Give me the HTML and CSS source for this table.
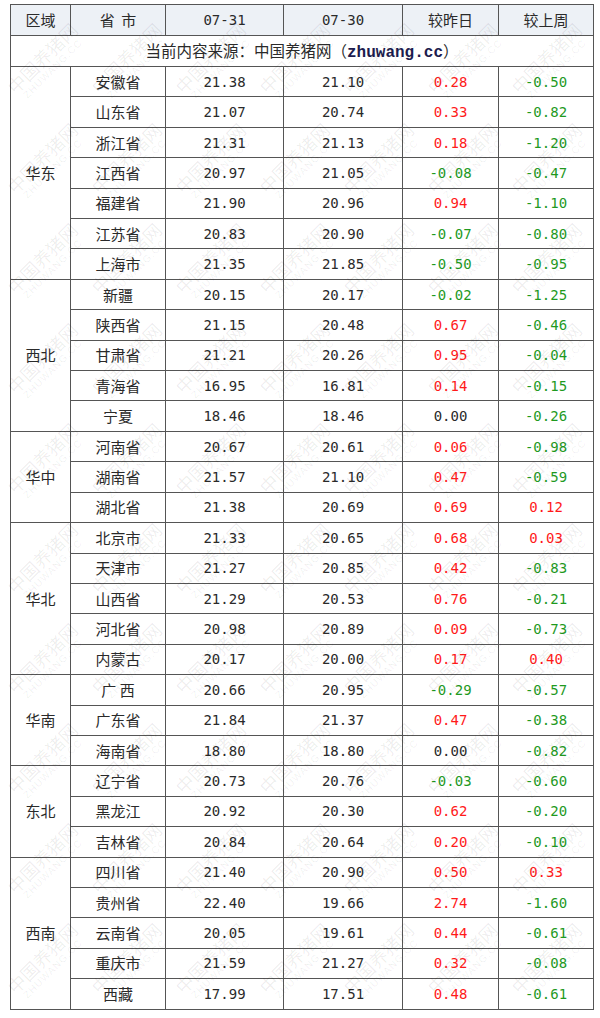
FILE: index.html
```html
<!DOCTYPE html>
<html lang="zh">
<head>
<meta charset="utf-8">
<title>生猪价格</title>
<link rel="stylesheet" href="styles.css">
</head>
<body>
<div class="page">
<table class="price">
<colgroup><col class="c1"><col class="c2"><col class="c3"><col class="c4"><col class="c5"><col class="c6"></colgroup>
<thead>
<tr class="head"><th>区域</th><th>省&nbsp;&nbsp;市</th><th class="num">07-31</th><th class="num">07-30</th><th>较昨日</th><th>较上周</th></tr>
<tr class="src"><td colspan="6">当前内容来源：中国养猪网（<b class="site">zhuwang.cc</b>）</td></tr>
</thead>
<tbody>
<tr><td rowspan="7" class="reg">华东</td><td>安徽省</td><td class="num">21.38</td><td class="num">21.10</td><td class="num up">0.28</td><td class="num dn">-0.50</td></tr>
<tr><td>山东省</td><td class="num">21.07</td><td class="num">20.74</td><td class="num up">0.33</td><td class="num dn">-0.82</td></tr>
<tr><td>浙江省</td><td class="num">21.31</td><td class="num">21.13</td><td class="num up">0.18</td><td class="num dn">-1.20</td></tr>
<tr><td>江西省</td><td class="num">20.97</td><td class="num">21.05</td><td class="num dn">-0.08</td><td class="num dn">-0.47</td></tr>
<tr><td>福建省</td><td class="num">21.90</td><td class="num">20.96</td><td class="num up">0.94</td><td class="num dn">-1.10</td></tr>
<tr><td>江苏省</td><td class="num">20.83</td><td class="num">20.90</td><td class="num dn">-0.07</td><td class="num dn">-0.80</td></tr>
<tr><td>上海市</td><td class="num">21.35</td><td class="num">21.85</td><td class="num dn">-0.50</td><td class="num dn">-0.95</td></tr>

<tr><td rowspan="5" class="reg">西北</td><td>新疆</td><td class="num">20.15</td><td class="num">20.17</td><td class="num dn">-0.02</td><td class="num dn">-1.25</td></tr>
<tr><td>陕西省</td><td class="num">21.15</td><td class="num">20.48</td><td class="num up">0.67</td><td class="num dn">-0.46</td></tr>
<tr><td>甘肃省</td><td class="num">21.21</td><td class="num">20.26</td><td class="num up">0.95</td><td class="num dn">-0.04</td></tr>
<tr><td>青海省</td><td class="num">16.95</td><td class="num">16.81</td><td class="num up">0.14</td><td class="num dn">-0.15</td></tr>
<tr><td>宁夏</td><td class="num">18.46</td><td class="num">18.46</td><td class="num">0.00</td><td class="num dn">-0.26</td></tr>

<tr><td rowspan="3" class="reg">华中</td><td>河南省</td><td class="num">20.67</td><td class="num">20.61</td><td class="num up">0.06</td><td class="num dn">-0.98</td></tr>
<tr><td>湖南省</td><td class="num">21.57</td><td class="num">21.10</td><td class="num up">0.47</td><td class="num dn">-0.59</td></tr>
<tr><td>湖北省</td><td class="num">21.38</td><td class="num">20.69</td><td class="num up">0.69</td><td class="num up">0.12</td></tr>

<tr><td rowspan="5" class="reg">华北</td><td>北京市</td><td class="num">21.33</td><td class="num">20.65</td><td class="num up">0.68</td><td class="num up">0.03</td></tr>
<tr><td>天津市</td><td class="num">21.27</td><td class="num">20.85</td><td class="num up">0.42</td><td class="num dn">-0.83</td></tr>
<tr><td>山西省</td><td class="num">21.29</td><td class="num">20.53</td><td class="num up">0.76</td><td class="num dn">-0.21</td></tr>
<tr><td>河北省</td><td class="num">20.98</td><td class="num">20.89</td><td class="num up">0.09</td><td class="num dn">-0.73</td></tr>
<tr><td>内蒙古</td><td class="num">20.17</td><td class="num">20.00</td><td class="num up">0.17</td><td class="num up">0.40</td></tr>

<tr><td rowspan="3" class="reg">华南</td><td>广&nbsp;西</td><td class="num">20.66</td><td class="num">20.95</td><td class="num dn">-0.29</td><td class="num dn">-0.57</td></tr>
<tr><td>广东省</td><td class="num">21.84</td><td class="num">21.37</td><td class="num up">0.47</td><td class="num dn">-0.38</td></tr>
<tr><td>海南省</td><td class="num">18.80</td><td class="num">18.80</td><td class="num">0.00</td><td class="num dn">-0.82</td></tr>

<tr><td rowspan="3" class="reg">东北</td><td>辽宁省</td><td class="num">20.73</td><td class="num">20.76</td><td class="num dn">-0.03</td><td class="num dn">-0.60</td></tr>
<tr><td>黑龙江</td><td class="num">20.92</td><td class="num">20.30</td><td class="num up">0.62</td><td class="num dn">-0.20</td></tr>
<tr><td>吉林省</td><td class="num">20.84</td><td class="num">20.64</td><td class="num up">0.20</td><td class="num dn">-0.10</td></tr>

<tr><td rowspan="5" class="reg">西南</td><td>四川省</td><td class="num">21.40</td><td class="num">20.90</td><td class="num up">0.50</td><td class="num up">0.33</td></tr>
<tr><td>贵州省</td><td class="num">22.40</td><td class="num">19.66</td><td class="num up">2.74</td><td class="num dn">-1.60</td></tr>
<tr><td>云南省</td><td class="num">20.05</td><td class="num">19.61</td><td class="num up">0.44</td><td class="num dn">-0.61</td></tr>
<tr><td>重庆市</td><td class="num">21.59</td><td class="num">21.27</td><td class="num up">0.32</td><td class="num dn">-0.08</td></tr>
<tr><td>西藏</td><td class="num">17.99</td><td class="num">17.51</td><td class="num up">0.48</td><td class="num dn">-0.61</td></tr>
</tbody>
</table>

<div class="watermark" aria-hidden="true">
<i class="wm">中国养猪网<b>ZHUWANG.CC</b></i><i class="wm">中国养猪网<b>ZHUWANG.CC</b></i><i class="wm">中国养猪网<b>ZHUWANG.CC</b></i><i class="wm">中国养猪网<b>ZHUWANG.CC</b></i><i class="wm">中国养猪网<b>ZHUWANG.CC</b></i><i class="wm">中国养猪网<b>ZHUWANG.CC</b></i><i class="wm">中国养猪网<b>ZHUWANG.CC</b></i>
<i class="wm">中国养猪网<b>ZHUWANG.CC</b></i><i class="wm">中国养猪网<b>ZHUWANG.CC</b></i><i class="wm">中国养猪网<b>ZHUWANG.CC</b></i><i class="wm">中国养猪网<b>ZHUWANG.CC</b></i><i class="wm">中国养猪网<b>ZHUWANG.CC</b></i><i class="wm">中国养猪网<b>ZHUWANG.CC</b></i><i class="wm">中国养猪网<b>ZHUWANG.CC</b></i>
<i class="wm">中国养猪网<b>ZHUWANG.CC</b></i><i class="wm">中国养猪网<b>ZHUWANG.CC</b></i><i class="wm">中国养猪网<b>ZHUWANG.CC</b></i><i class="wm">中国养猪网<b>ZHUWANG.CC</b></i><i class="wm">中国养猪网<b>ZHUWANG.CC</b></i><i class="wm">中国养猪网<b>ZHUWANG.CC</b></i><i class="wm">中国养猪网<b>ZHUWANG.CC</b></i>
<i class="wm">中国养猪网<b>ZHUWANG.CC</b></i><i class="wm">中国养猪网<b>ZHUWANG.CC</b></i><i class="wm">中国养猪网<b>ZHUWANG.CC</b></i><i class="wm">中国养猪网<b>ZHUWANG.CC</b></i><i class="wm">中国养猪网<b>ZHUWANG.CC</b></i><i class="wm">中国养猪网<b>ZHUWANG.CC</b></i><i class="wm">中国养猪网<b>ZHUWANG.CC</b></i>
<i class="wm">中国养猪网<b>ZHUWANG.CC</b></i><i class="wm">中国养猪网<b>ZHUWANG.CC</b></i><i class="wm">中国养猪网<b>ZHUWANG.CC</b></i><i class="wm">中国养猪网<b>ZHUWANG.CC</b></i><i class="wm">中国养猪网<b>ZHUWANG.CC</b></i><i class="wm">中国养猪网<b>ZHUWANG.CC</b></i><i class="wm">中国养猪网<b>ZHUWANG.CC</b></i>
<i class="wm">中国养猪网<b>ZHUWANG.CC</b></i><i class="wm">中国养猪网<b>ZHUWANG.CC</b></i><i class="wm">中国养猪网<b>ZHUWANG.CC</b></i><i class="wm">中国养猪网<b>ZHUWANG.CC</b></i><i class="wm">中国养猪网<b>ZHUWANG.CC</b></i><i class="wm">中国养猪网<b>ZHUWANG.CC</b></i><i class="wm">中国养猪网<b>ZHUWANG.CC</b></i>
<i class="wm">中国养猪网<b>ZHUWANG.CC</b></i><i class="wm">中国养猪网<b>ZHUWANG.CC</b></i><i class="wm">中国养猪网<b>ZHUWANG.CC</b></i><i class="wm">中国养猪网<b>ZHUWANG.CC</b></i><i class="wm">中国养猪网<b>ZHUWANG.CC</b></i><i class="wm">中国养猪网<b>ZHUWANG.CC</b></i><i class="wm">中国养猪网<b>ZHUWANG.CC</b></i>
<i class="wm">中国养猪网<b>ZHUWANG.CC</b></i><i class="wm">中国养猪网<b>ZHUWANG.CC</b></i><i class="wm">中国养猪网<b>ZHUWANG.CC</b></i><i class="wm">中国养猪网<b>ZHUWANG.CC</b></i><i class="wm">中国养猪网<b>ZHUWANG.CC</b></i><i class="wm">中国养猪网<b>ZHUWANG.CC</b></i><i class="wm">中国养猪网<b>ZHUWANG.CC</b></i>
<i class="wm">中国养猪网<b>ZHUWANG.CC</b></i><i class="wm">中国养猪网<b>ZHUWANG.CC</b></i><i class="wm">中国养猪网<b>ZHUWANG.CC</b></i><i class="wm">中国养猪网<b>ZHUWANG.CC</b></i><i class="wm">中国养猪网<b>ZHUWANG.CC</b></i><i class="wm">中国养猪网<b>ZHUWANG.CC</b></i><i class="wm">中国养猪网<b>ZHUWANG.CC</b></i>
<i class="wm">中国养猪网<b>ZHUWANG.CC</b></i><i class="wm">中国养猪网<b>ZHUWANG.CC</b></i><i class="wm">中国养猪网<b>ZHUWANG.CC</b></i><i class="wm">中国养猪网<b>ZHUWANG.CC</b></i><i class="wm">中国养猪网<b>ZHUWANG.CC</b></i><i class="wm">中国养猪网<b>ZHUWANG.CC</b></i><i class="wm">中国养猪网<b>ZHUWANG.CC</b></i>
</div>
</div>
</body>
</html>
```

FILE: styles.css
```css
html, body {
  margin: 0;
  padding: 0;
  background: #ffffff;
}

.page {
  position: relative;
  width: 600px;
  height: 1018px;
  padding: 4px 0 0 10px;
  box-sizing: border-box;
  overflow: hidden;
  font-family: "Noto Sans CJK SC", "Noto Sans", sans-serif;
  color: #2a2a2a;
}

.price {
  border-collapse: collapse;
  table-layout: fixed;
  width: 583px;
  font-size: 15px;
  border: 1px solid #444;
}

.c1 { width: 60px; }
.c2 { width: 95px; }
.c3 { width: 118px; }
.c4 { width: 119px; }
.c5 { width: 96px; }
.c6 { width: 95px; }

.price th,
.price td {
  border: 1px solid #555;
  padding: 0;
  text-align: center;
  vertical-align: middle;
  height: 29.42px;
  line-height: 18px;
  white-space: nowrap;
}

.price thead th,
.price thead td {
  height: 30px;
}

.head th {
  background: #edf1f6;
  font-weight: normal;
}

.num {
  font-family: "DejaVu Sans Mono", "Liberation Mono", monospace;
  font-size: 14px;
}

.up { color: #ff1a1a; }
.dn { color: #1f9a1f; }

.src td {
  font-size: 15.5px;
}

.site {
  font-family: "Liberation Mono", "DejaVu Sans Mono", monospace;
  font-weight: bold;
  font-size: 16px;
  color: #1c1c4e;
}

.watermark {
  position: absolute;
  left: 4px;
  top: 12px;
  width: 595px;
  height: 1000px;
  display: flex;
  flex-wrap: wrap;
  align-content: flex-start;
  pointer-events: none;
}

.wm {
  width: 84px;
  height: 100px;
  display: flex;
  flex-direction: column;
  align-items: center;
  justify-content: center;
  font-style: normal;
  font-size: 18px;
  line-height: 20px;
  color: rgba(0, 0, 0, 0.07);
  transform: rotate(-45deg);
  white-space: nowrap;
}

.wm b {
  font-family: "Liberation Sans", sans-serif;
  font-weight: normal;
  font-size: 10px;
  line-height: 12px;
  letter-spacing: 1px;
}
```
